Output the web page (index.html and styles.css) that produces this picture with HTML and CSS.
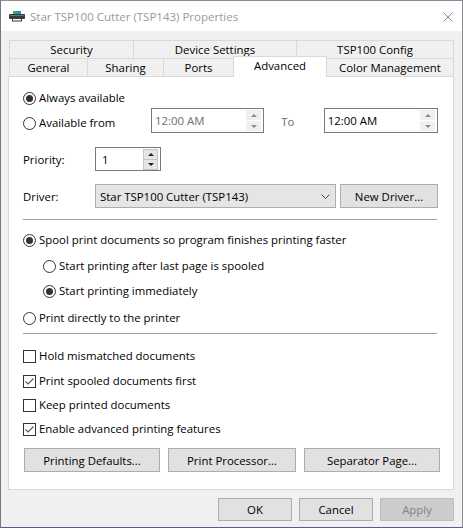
FILE: index.html
```html
<!DOCTYPE html>
<html>
<head>
<meta charset="utf-8">
<title>Star TSP100 Cutter (TSP143) Properties</title>
<link rel="stylesheet" href="styles.css">
</head>
<body>
<div class="window">
  <div class="titlebar">
    <svg class="app-icon" width="16" height="11" viewBox="0 0 16 11">
      <defs>
        <linearGradient id="pg" x1="0" y1="0" x2="1" y2="0">
          <stop offset="0" stop-color="#2fb84a"/>
          <stop offset="1" stop-color="#1a86e8"/>
        </linearGradient>
      </defs>
      <rect x="4" y="0" width="8" height="3" fill="url(#pg)"/>
      <rect x="0" y="3" width="16" height="5" rx="1" fill="#3b3b3b"/>
      <rect x="1" y="4" width="14" height="1" fill="#6b6b6b"/>
      <rect x="3.5" y="7.5" width="9" height="2.5" fill="#fff" stroke="#3b3b3b" stroke-width="1"/>
    </svg>
    <span class="title">Star TSP100 Cutter (TSP143) Properties</span>
    <svg class="close" width="10" height="10" viewBox="0 0 10 10">
      <path d="M0.5 0.5 L9.5 9.5 M9.5 0.5 L0.5 9.5" stroke="#8a8a8a" stroke-width="1" fill="none"/>
    </svg>
  </div>

  <div class="client">
    <div class="tabs">
      <div class="tabrow back">
        <div class="tab t-security">Security</div>
        <div class="tab t-device">Device Settings</div>
        <div class="tab t-config">TSP100 Config</div>
      </div>
      <div class="tabrow front">
        <div class="tab t-general">General</div>
        <div class="tab t-sharing">Sharing</div>
        <div class="tab t-ports">Ports</div>
        <div class="tab t-advanced selected">Advanced</div>
        <div class="tab t-color">Color Management</div>
      </div>
    </div>

    <div class="panel">
      <div class="row r-always">
        <label class="opt"><span class="radio checked"></span><span>Always available</span></label>
      </div>
      <div class="row r-from">
        <label class="opt from-label"><span class="radio"></span><span>Available from</span></label>
        <div class="field time dim">
          <span class="val">12:00 AM</span>
          <span class="spin flat"><span class="up"></span><span class="down"></span></span>
        </div>
        <span class="to">To</span>
        <div class="field time time2">
          <span class="val">12:00 AM</span>
          <span class="spin flat"><span class="up"></span><span class="down"></span></span>
        </div>
      </div>
      <div class="row r-priority">
        <span class="lbl">Priority:</span>
        <div class="field prio">
          <span class="val">1</span>
          <span class="spin boxed"><span class="up"></span><span class="down"></span></span>
        </div>
      </div>
      <div class="row r-driver">
        <span class="lbl">Driver:</span>
        <div class="combo">
          <span class="val">Star TSP100 Cutter (TSP143)</span>
          <svg class="chev" width="9" height="5" viewBox="0 0 9 5"><path d="M0.5 0.5 L4.5 4.5 L8.5 0.5" stroke="#444" stroke-width="1" fill="none"/></svg>
        </div>
        <div class="btn b-newdriver">New Driver...</div>
      </div>
      <div class="sep s1"></div>
      <div class="row r-spool">
        <label class="opt"><span class="radio checked"></span><span>Spool print documents so program finishes printing faster</span></label>
      </div>
      <div class="row r-sub1 sub">
        <label class="opt"><span class="radio"></span><span>Start printing after last page is spooled</span></label>
      </div>
      <div class="row r-sub2 sub">
        <label class="opt"><span class="radio checked"></span><span>Start printing immediately</span></label>
      </div>
      <div class="row r-direct">
        <label class="opt"><span class="radio"></span><span>Print directly to the printer</span></label>
      </div>
      <div class="sep s2"></div>
      <div class="row r-c1">
        <label class="opt"><span class="check"></span><span>Hold mismatched documents</span></label>
      </div>
      <div class="row r-c2">
        <label class="opt"><span class="check checked"><svg width="11" height="11" viewBox="0 0 11 11"><path d="M1.5 5.5 L4 8 L9.5 2.5" stroke="#555" stroke-width="1.1" fill="none"/></svg></span><span>Print spooled documents first</span></label>
      </div>
      <div class="row r-c3">
        <label class="opt"><span class="check"></span><span>Keep printed documents</span></label>
      </div>
      <div class="row r-c4">
        <label class="opt"><span class="check checked"><svg width="11" height="11" viewBox="0 0 11 11"><path d="M1.5 5.5 L4 8 L9.5 2.5" stroke="#555" stroke-width="1.1" fill="none"/></svg></span><span>Enable advanced printing features</span></label>
      </div>
      <div class="row r-buttons">
        <div class="btn b-defaults">Printing Defaults...</div>
        <div class="btn b-processor">Print Processor...</div>
        <div class="btn b-separator">Separator Page...</div>
      </div>
    </div>

    <div class="footer">
      <div class="btn b-foot">OK</div>
      <div class="btn b-foot">Cancel</div>
      <div class="btn b-foot disabled">Apply</div>
    </div>
  </div>
</div>
</body>
</html>
```

FILE: styles.css
```css
* { box-sizing: border-box; }
html, body { margin: 0; padding: 0; }
body {
  background: #fff;
  font-family: "Open Sans", "Liberation Sans", sans-serif;
  font-size: 11.4px;
  color: #000;
}

.window {
  width: 463px;
  height: 528px;
  border: 1px solid #8c8c98;
  border-left-color: #767690;
  border-bottom-color: #5c5c8a;
  display: flex;
  flex-direction: column;
  background: #f0f0f0;
}

/* Title bar */
.titlebar {
  height: 30px;
  flex: none;
  background: #fff;
  display: flex;
  align-items: center;
  padding-left: 8px;
  color: #999;
  font-size: 11.5px;
}
.app-icon { flex: none; margin-top: 1px; }
.title { margin-left: 5px; }
.close { margin-left: auto; margin-right: 9px; margin-top: 1px; }

/* Client area */
.client {
  flex: 1;
  padding: 9px 8px 0 7px;
  display: flex;
  flex-direction: column;
}

.tabs { flex: none; }
.tabrow {
  display: flex;
  align-items: flex-start;
  margin-left: 1px;
  height: 18px;
}
.tab {
  height: 18px;
  border: 1px solid #d9d9d9;
  border-bottom: none;
  margin-right: -1px;
  background: #f0f0f0;
  display: flex;
  align-items: center;
  justify-content: center;
  white-space: nowrap;
}
.tab.selected {
  position: relative;
  z-index: 2;
  height: 21px;
  margin-top: -2px;
  background: #fff;
  padding-bottom: 3px;
}
.t-security { width: 125px; }
.t-device { width: 164px; }
.t-config { width: 158px; }
.t-general { width: 79px; }
.t-sharing { width: 77px; }
.t-ports { width: 71px; }
.t-advanced { width: 94px; }
.t-color { width: 128px; }

/* Panel */
.panel {
  position: relative;
  z-index: 1;
  height: 414px;
  flex: none;
  background: #fff;
  border: 1px solid #d9d9d9;
  padding: 11px 15px 0 14px;
  display: flex;
  flex-direction: column;
}

.row { display: flex; align-items: center; flex: none; }
.opt { display: inline-flex; align-items: center; gap: 3px; white-space: nowrap; }
.opt > span:last-child { padding-bottom: 1px; }

.radio {
  width: 13px;
  height: 13px;
  border: 1px solid #333;
  border-radius: 50%;
  background: #fff;
  display: inline-flex;
  align-items: center;
  justify-content: center;
  flex: none;
}
.radio.checked::after {
  content: "";
  width: 7px;
  height: 7px;
  border-radius: 50%;
  background: #333;
}
.check {
  width: 13px;
  height: 13px;
  border: 1px solid #333;
  background: #fff;
  display: inline-flex;
  align-items: center;
  justify-content: center;
  flex: none;
}
.check svg { display: block; }

.r-always { height: 20px; }
.r-from { height: 25px; }
.r-from .from-label { width: 129px; margin-top: 5px; }

.field {
  height: 100%;
  border: 1px solid #7a7a7a;
  background: #fff;
  display: flex;
  align-items: center;
  padding-left: 3px;
  padding-right: 2px;
}
.field .val { flex: 1; }
.time { width: 114px; }
.time.dim .val { color: #6d6d6d; }
.time2 { width: 115px; }
.to { width: 60px; padding-left: 17px; color: #6d6d6d; margin-top: 1px; }

.spin {
  width: 15px;
  height: 21px;
  display: flex;
  flex-direction: column;
  flex: none;
}
.spin .up, .spin .down {
  flex: 1;
  display: flex;
  align-items: center;
  justify-content: center;
}
.spin .up::after {
  content: "";
  border-left: 3px solid transparent;
  border-right: 3px solid transparent;
  border-bottom: 3px solid #8a8a8a;
}
.spin .down::after {
  content: "";
  border-left: 3px solid transparent;
  border-right: 3px solid transparent;
  border-top: 3px solid #8a8a8a;
}
.spin.flat { background: #f0f0f0; }
.spin.flat .up { border-bottom: 1px solid #fff; }
.spin.boxed .up, .spin.boxed .down {
  background: #e5e5e5;
  border: 1px solid #c4c4c4;
}
.spin.boxed .down { border-top: none; }
.spin.boxed .up::after { border-bottom-color: #222; }
.spin.boxed .down::after { border-top-color: #222; }

.r-priority { height: 24px; margin-top: 14px; }
.lbl { width: 72px; flex: none; }
.prio { width: 66px; padding-left: 6px; }

.r-driver { height: 24px; margin-top: 13px; }
.combo {
  width: 242px;
  height: 100%;
  border: 1px solid #adadad;
  background: #e5e5e5;
  display: flex;
  align-items: center;
  padding: 0 5px 0 4px;
}
.combo .val { flex: 1; }
.chev { display: block; margin-top: 1px; }

.btn {
  height: 24px;
  border: 1px solid #adadad;
  background: #e1e1e1;
  display: flex;
  align-items: center;
  justify-content: center;
  white-space: nowrap;
  flex: none;
}
.b-newdriver { width: 98px; margin-left: 4px; }

.sep { height: 1px; width: 414px; background: #a0a0a0; flex: none; }
.s1 { margin-top: 11px; }
.s2 { margin-top: 7px; }

.r-spool { height: 16px; margin-top: 12px; }
.sub { padding-left: 20px; }
.r-sub1 { height: 16px; margin-top: 10px; }
.r-sub2 { height: 16px; margin-top: 9px; }
.r-direct { height: 16px; margin-top: 11px; }

.r-c1 { height: 16px; margin-top: 14px; }
.r-c2 { height: 16px; margin-top: 9px; }
.r-c3 { height: 16px; margin-top: 8px; }
.r-c4 { height: 16px; margin-top: 8px; }

.r-buttons { height: 24px; margin-top: 11px; margin-left: 1px; gap: 8px; }
.b-defaults { width: 136px; }
.b-processor { width: 128px; }
.b-separator { width: 136px; }

/* Footer */
.footer {
  margin-top: 8px;
  display: flex;
  justify-content: flex-end;
  gap: 7px;
}
.b-foot { width: 74px; height: 23px; }
.b-foot.disabled {
  background: #cccccc;
  border-color: #bfbfbf;
  color: #838383;
}
```
